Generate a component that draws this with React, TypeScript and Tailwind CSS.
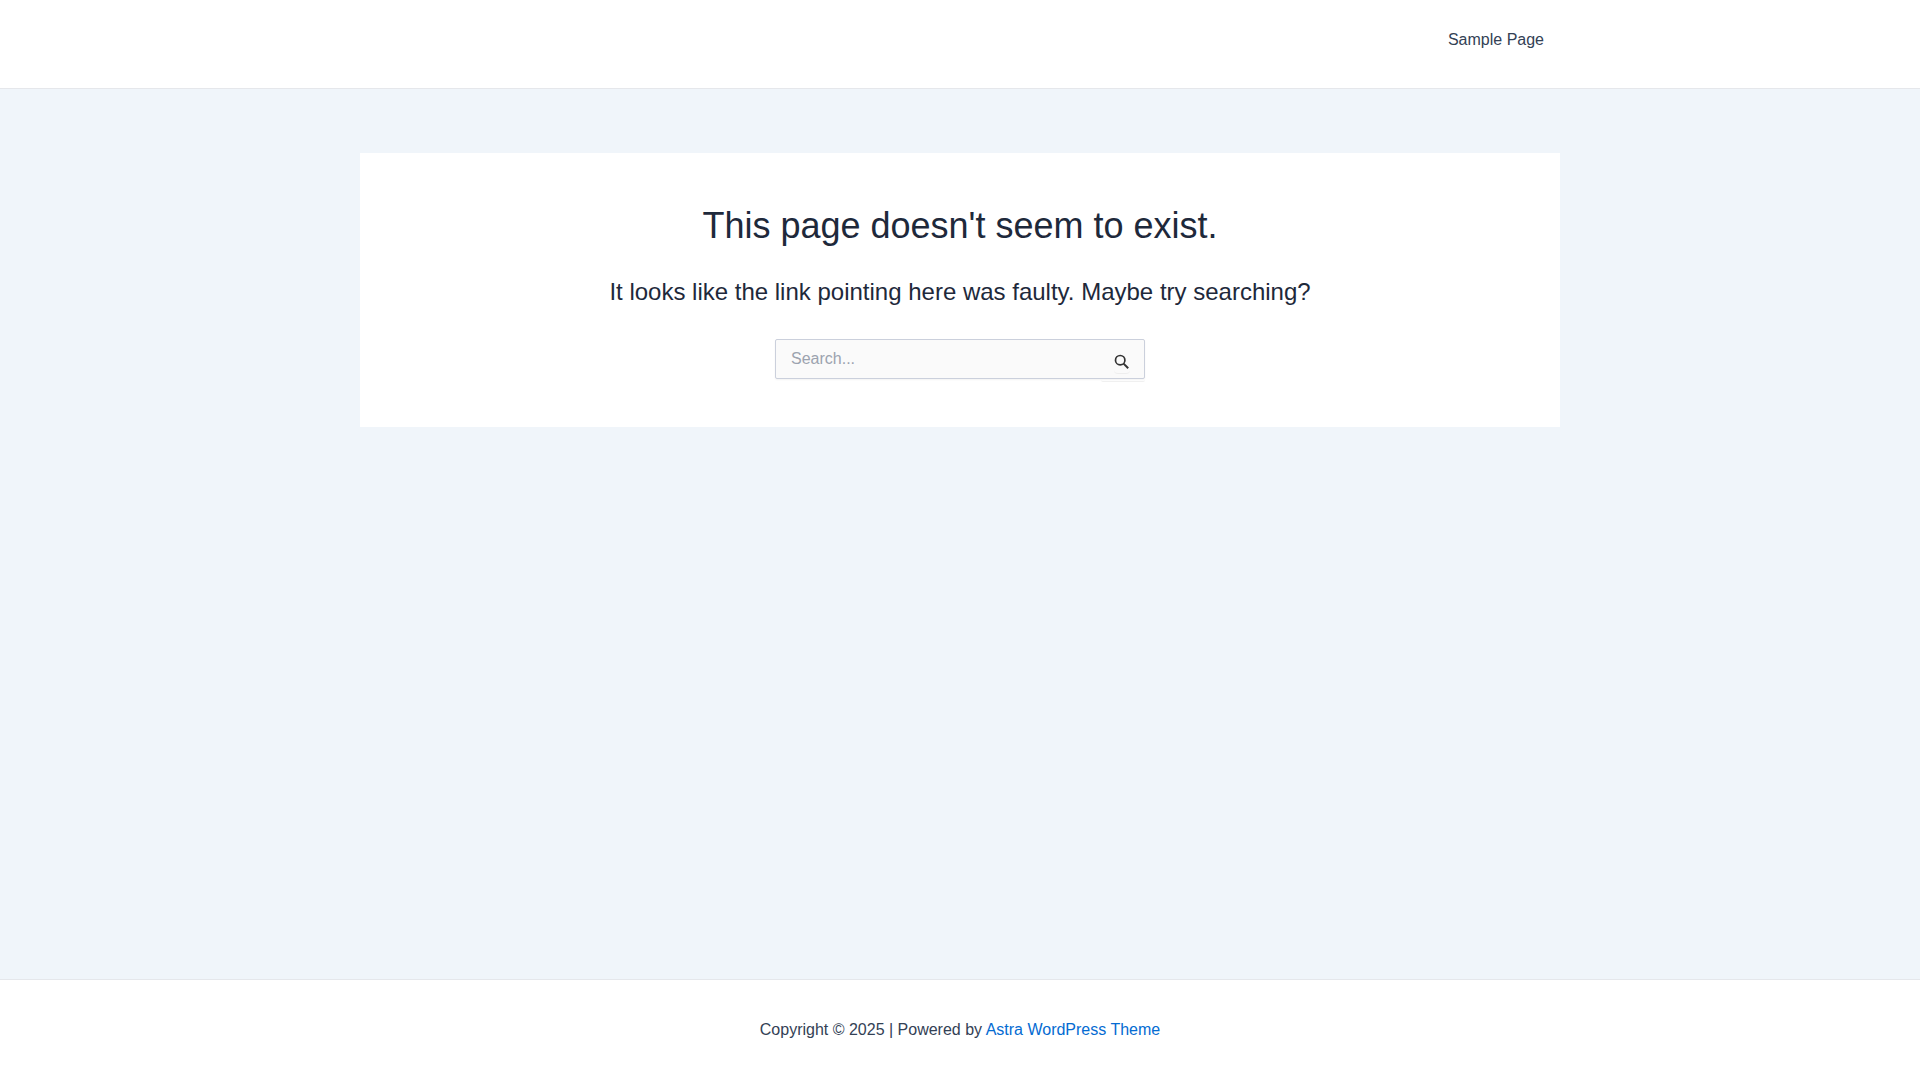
function Header() {
    return (
        <header className="bg-white border-b border-[#e5e7eb]">
            <nav aria-label="Primary" className="mx-auto flex h-22 max-w-[1240px] items-start justify-end px-5">
                <a href="#" className="px-4 leading-20 text-[#334155]">
                    Sample Page
                </a>
            </nav>
        </header>
    )
}

function SearchIcon() {
    return (
        <svg viewBox="0 0 16 16" fill="none" stroke="currentColor" className="size-4 text-[#333]" aria-hidden="true">
            <circle cx="6.2" cy="6.2" r="4.7" strokeWidth="1.7" />
            <path d="M9.6 9.6 14.2 14.2" strokeWidth="2" />
        </svg>
    )
}

function SearchForm() {
    return (
        <form role="search" className="relative mx-auto w-full max-w-[370px]">
            <input
                type="search"
                aria-label="Search for:"
                placeholder="Search..."
                className="block h-10 w-full rounded-xs border border-[#cbd0dc] bg-[#fafafa] pl-[15px] pr-12 text-[#334155] shadow-xs placeholder:text-[#9ca3af]"
            />
            <button
                type="submit"
                aria-label="Search"
                className="absolute right-0 top-0 flex h-[43px] w-11 items-end justify-center rounded-xs border-b border-[#f0f0f0] pb-[7px] pr-[2px]"
            >
                <span className="flex h-5 rounded-sm border-b border-[#eeeeee]">
                    <SearchIcon />
                </span>
            </button>
        </form>
    )
}

export default function App() {
    return (
        <div className="flex min-h-screen flex-col bg-[#f0f5fa] font-['Liberation_Sans',Arial,sans-serif] text-base text-[#334155]">
            <Header />
            <main className="mx-auto w-full max-w-[1200px] flex-1 py-16">
                <section className="bg-white px-5 py-12 text-center text-[#1e293b]">
                    <h1 className="text-4xl leading-[50px]">This page doesn't seem to exist.</h1>
                    <p className="mt-6 mb-[30px] text-2xl leading-[34px]">
                        It looks like the link pointing here was faulty. Maybe try searching?
                    </p>
                    <SearchForm />
                </section>
            </main>
            <footer className="border-t border-[#e5e7eb] bg-white py-9 text-center leading-7">
                <p>
                    Copyright © 2025 | Powered by{" "}
                    <a href="#" className="text-[#046bd2]">
                        Astra WordPress Theme
                    </a>
                </p>
            </footer>
        </div>
    )
}
